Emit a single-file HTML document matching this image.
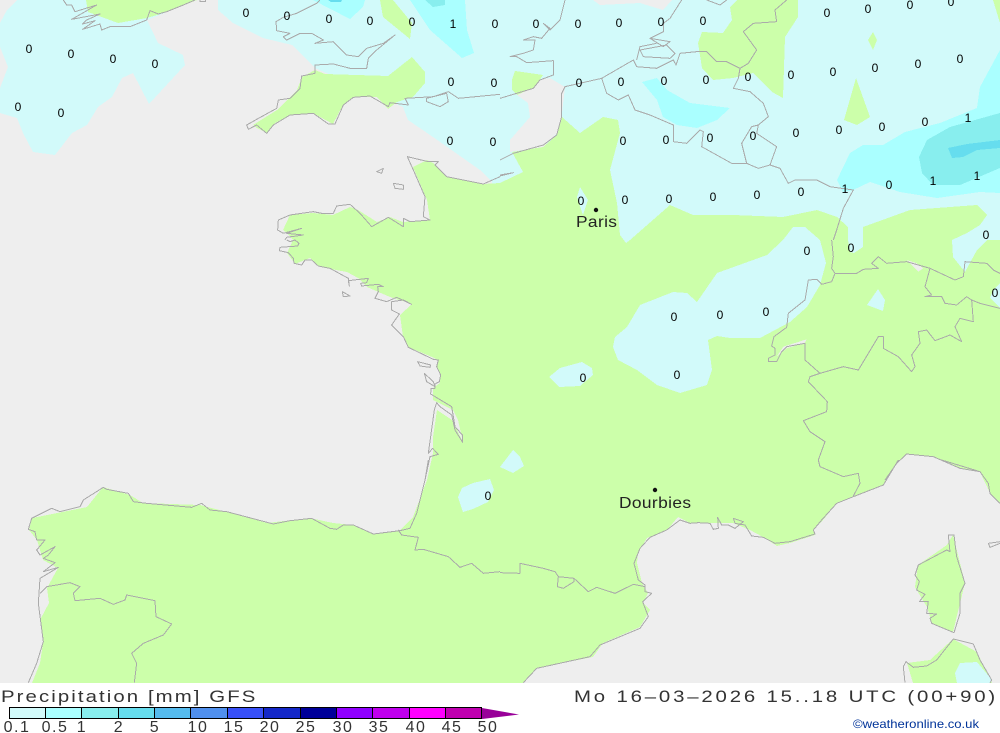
<!DOCTYPE html>
<html><head><meta charset="utf-8"><style>
html,body{margin:0;padding:0;background:#fff;width:1000px;height:733px;overflow:hidden}
svg{display:block}
text{font-family:"Liberation Sans",sans-serif;fill:#111}
.n text{font-size:12px;text-anchor:middle;fill:#000}
.c{fill:none;stroke:#aaaaaa;stroke-width:3;stroke-linejoin:round}
.l text{font-size:16px;text-anchor:middle;fill:#333;letter-spacing:1.5px}
</style></head><body>
<svg width="1000" height="733" viewBox="0 0 1000 733" xmlns="http://www.w3.org/2000/svg">
<rect width="1000" height="683" fill="#eeeeee"/>
<g shape-rendering="crispEdges">
<!-- light cyan -->
<g fill="#d2fafa">
<polygon points="17,0 7,10 0,23 0,47 8,67 0,88 0,113 17,118 23,133 33,152 55,155 72,133 87,125 98,107 112,97 122,78 133,73 149,104 185,65 183,55 158,43 147,20 197,0"/>
<polygon points="218,0 218,10 233,23 263,38 292,45 315,68 403,107 408,120 433,137 480,170 492,182 500,300 1000,300 1000,0"/>
</g>
<!-- main land green -->
<polygon fill="#ccffaa" points="287,233 283,230 290,215 313,213 333,215 350,207 358,210 377,222 390,217 403,222 430,220 427,200 413,167 427,160 433,163 447,177 483,184 500,183 523,172 512,152 543,147 557,135 562,117 580,133 603,117 618,120 620,133 610,170 617,203 620,235 626,243 630,240 670,205 693,215 733,215 783,217 817,210 837,217 848,227 848,240 850,252 854,253 863,247 863,227 910,210 977,205 987,215 980,225 967,233 952,240 953,257 965,272 977,250 987,240 1000,240 1000,503 990,493 980,472 960,468 933,457 907,454 897,463 887,477 883,485 853,497 837,503 823,520 813,530 815,535 790,543 777,546 763,537 750,530 733,523 713,523 690,523 678,517 667,530 647,538 638,553 637,563 642,583 648,593 643,603 650,610 640,627 603,643 593,657 537,668 523,683 32,683 40,663 43,643 40,620 49,603 47,588 58,568 43,560 37,540 29,530 32,518 87,507 103,487 130,495 143,503 200,505 227,512 267,523 310,518 333,523 353,525 373,534 400,530 413,517 427,480 433,453 433,437 437,410 452,420 457,430 463,442 458,420 453,410 433,400 433,388 440,383 440,373 437,367 438,360 432,357 408,347 403,337 400,315 412,304 390,297 367,287 358,278 347,272 320,267 310,258 295,264 287,253 293,240"/>
<!-- gray channel -->
<g fill="#eeeeee">
<polygon points="517,95 537,80 550,78 565,87 562,113 557,133 543,147 510,152 510,140 530,117 528,103"/>
<polygon points="593,0 600,5 640,3 663,10 672,0"/>
</g>
<!-- green islands -->
<g fill="#ccffaa">
<polygon points="253,125 277,110 297,90 302,77 315,70 325,74 388,76 412,57 425,72 425,83 413,97 397,102 388,109 377,97 353,97 343,105 333,124 320,117 313,113 290,115 275,123 267,133 257,128"/>
<polygon points="86,0 88,12 118,23 147,18 167,12 197,0"/>
<polygon points="380,0 383,17 410,39 412,23 393,0"/>
<polygon points="737,0 798,0 798,17 785,37 783,98 772,92 753,73 733,78 713,80 702,68 698,43 702,32 723,33 732,20 730,7"/>
<polygon points="512,90 512,80 515,71 543,75 535,87 517,95"/>
<polygon points="868,40 873,32 877,40 873,50"/>
<polygon points="844,120 856,78 870,117 857,125"/>
<polygon points="993,0 1000,23 1000,0"/>
<polygon points="915,587 918,565 947,545 953,535 965,583 953,632 932,623 927,607"/>
<polygon points="907,663 913,683 992,683 977,652 953,639 930,660"/>
</g>
<!-- cyan over land -->
<g fill="#d2fafa">
<polygon points="613,347 615,337 627,327 640,305 673,292 687,293 697,302 717,273 767,255 783,240 793,227 805,227 820,240 826,263 820,285 807,307 790,322 760,338 730,338 717,336 708,340 712,370 707,385 680,393 657,385 637,370 618,360"/>
<polygon points="577,197 580,187 588,200 583,215"/>
<polygon points="1000,283 993,290 990,298 997,305 1000,308"/>
<polygon points="867,305 878,289 885,300 883,311"/>
<polygon points="500,467 513,450 520,457 524,466 513,473"/>
<polygon points="549,377 560,368 582,362 592,368 593,375 580,386 559,387"/>
<polygon points="458,497 462,488 473,483 490,479 494,490 488,502 473,509 463,512"/>
<polygon points="955,673 960,663 977,662 992,680 990,683 957,683"/>
</g>
<!-- stronger precip -->
<g fill="#aaffff">
<polygon points="410,0 430,30 462,58 474,53 467,30 465,0"/>
<polygon points="313,0 350,19 363,7 365,0"/>
<polygon points="642,82 657,78 667,90 690,103 730,108 717,120 697,128 677,125 663,117 657,100"/>
<polygon points="837,180 850,153 863,145 883,145 905,132 940,123 977,108 980,87 1000,50 1000,193 980,192 937,198 900,192 870,182 853,190 843,192"/>
</g>
<polygon fill="#88eeee" points="425,0 433,7 445,5 445,0"/>
<polygon fill="#66ddee" points="328,0 331,2 341,2 342,0"/>
<polygon fill="#88eeee" points="919,157 927,140 950,127 1000,113 1000,168 960,185 933,185 922,173"/>
<polygon fill="#66ddee" points="948,148 967,144 1000,140 1000,148 977,150 963,157 952,158"/>
</g>
<!-- coastlines (coordinates are in 3x space, scaled down) -->
<g class="c" shape-rendering="crispEdges">
<g transform="scale(.33333)">
<path d="M190 0 200 15 215 15 225 35 290 15 215 58 300 42 260 60 248 72 285 62 248 88 300 72 305 90 330 80 390 80 440 60 450 32 475 42 500 35 550 15 585 0"/>
<path d="M960 0 950 10 890 40 850 52 828 65 830 92 870 100 850 110 860 120 900 100 935 100 970 120 945 130 1000 125 1040 165 1075 170 1100 145 1150 130 1185 105 1130 150 1105 175 1100 205 1050 205 1000 192 945 195 945 220 905 228 900 265 870 295 835 300 830 325 770 358 740 375 745 388 770 375 800 400 820 375 870 345 940 340 985 372 1005 372 1030 315 1060 292 1110 288 1165 320 1170 308 1225 315 1215 295 1300 290 1345 275 1375 295 1500 283"/>
<path d="M1280 295 1340 280 1345 305 1320 320 1280 305Z"/>
<path d="M850 700 833 690 835 660 870 645 940 635 965 640 1000 640 1010 618 1050 613 1080 640 1115 680 1165 652 1210 680 1210 655 1230 665 1290 660 1270 650 1275 590 1240 510 1222 470 1285 485 1315 485 1305 495 1340 530 1450 552 1500 530"/>
<path d="M850 700 905 685 860 700 910 705 860 712 855 720"/>
<path d="M1130 515 1150 505 1145 520Z M1180 550 1210 555 1210 568 1185 565Z"/>
<path d="M600 0 600 5 616 5 616 0"/>
</g>
<g transform="translate(500,0) scale(.33333)">
<path d="M0 295 100 265 120 240 160 225 160 182 80 188 50 170 30 170 70 160 100 150 105 120 70 120 100 110 125 115 150 85 130 70 150 90 180 60 195 0"/>
<path d="M0 480 40 460 130 435 170 405 185 350 185 280 195 260 305 235 400 180 410 200 470 205 520 180 528 195 540 160 590 155 620 155 650 185 680 185 720 205 715 235 700 265 750 275 790 310 805 350 775 375 770 400 830 440 810 495 840 505 865 550 885 540 950 540 990 560 1060 570 1030 625 1010 690 1000 720"/>
<path d="M305 235 320 280 355 300 385 285 405 330 450 345 520 375 520 425 560 430 600 390 610 395 605 440 695 490 740 490 775 505 810 495 M740 490 725 430 755 380 775 375"/>
<path d="M720 205 745 190 770 150 730 95 760 70 830 65 825 30 860 0"/>
<path d="M545 0 510 55 490 70 490 95 450 115 510 125 490 140 450 115 M420 150 500 135 525 160 510 175 430 170Z M410 180 420 140 470 130"/>
<path d="M620 0 660 15 680 0"/>
<path d="M0 525 40 518 0 528" />
</g>
<g transform="translate(0,240) scale(.33333)">
<path d="M860 0 870 5 885 0 897 10 893 18 840 22 838 32 865 38 880 55 882 70 905 75 915 60 935 60 955 78 990 85 1045 115 1048 138 1045 122 1105 115 1100 128 1082 130 1085 138 1135 133 1150 140 1133 140 1135 155 1125 175 1160 185 1190 172 1235 193 1210 180 1175 185 1175 210 1198 222 1175 255 1210 290 1225 322 1300 358 1315 360 1310 380 1322 405 1318 425 1305 432 1305 445 1293 445 1292 462 1355 500 1365 560 1387 585 1388 607 1365 570 1355 525 1320 500 1310 488 1303 510 1285 640 1298 625 1315 643 1290 650 1275 720"/>
<path d="M1027 155 1050 168 1030 170Z M1253 365 1292 375 1290 382 1260 378Z M1273 400 1300 425 1305 440 1280 425Z"/>
</g>
<g transform="translate(0,460) scale(.33333)">
<path d="M1285 0 1275 60 1250 160 1230 205 1200 212 1120 222 1060 195 1030 195 1010 208 990 205 935 175 870 182 820 192 680 155 630 150 605 130 575 142 440 130 400 125 385 100 320 88 310 82 250 120 240 140 180 155 155 145 115 165 95 175 85 208 105 215 110 240 135 240 110 270 120 285 165 260 145 285 130 295 165 308 130 335 175 322 120 355 115 430 130 545 110 610 85 668"/>
<path d="M1195 210 1205 225 1255 232 1245 270 1270 268 1345 290 1380 322 1415 310 1450 340 1500 335"/>
<path d="M120 400 140 380 210 368 240 380 220 400 225 422 300 415 340 433 375 420 380 405 465 422 468 470 515 492 490 525 430 550 395 580 410 610 403 668"/>
</g>
<g transform="translate(500,240) scale(.33333)">
<polygon points="830,350 850,320 920,298 915,308 860,325" fill="#eeeeee" stroke="none"/>
<polygon points="1220,60 1250,70 1270,85 1255,95" fill="#eeeeee" stroke="none"/>
<path d="M955 660 975 605 930 575 910 542 980 515 982 485 925 425 930 410 960 400 915 360 915 310 860 320 845 335 830 365 805 365 805 355 825 345 825 325 815 318 822 290 860 262 865 220 915 180 925 120 950 118 965 133 995 125 1005 100 1070 100 1090 88 1135 85 1115 70 1135 50 1160 70 1220 65 1290 85 1365 120 1390 110 1395 65 1460 70 1480 90 1500 100"/>
<path d="M960 400 1030 380 1075 390 1135 290 1150 290 1150 325 1195 350 1235 395 1245 380 1235 345 1260 310 1255 275 1280 270 1305 302 1350 285 1385 305 1365 260 1380 235 1420 245 1415 180 1400 170 1370 195 1335 190 1325 170 1275 170 1295 165 1275 140 1290 85"/>
<path d="M1415 180 1440 190 1500 205"/>
<path d="M995 0 1000 50 995 85 1005 100"/>
<path d="M1155 720 1190 670 1220 642 1300 650 1380 685 1440 695"/>
</g>
<g transform="translate(500,460) scale(.33333)">
<path d="M70 668 110 625 270 590 300 555 420 505 445 470 428 425 455 400 435 395 435 375 415 360 402 310 420 265 450 232 500 210 540 180 570 190 595 188 630 190 640 208 655 205 653 172 665 195 685 195 705 205 730 185 700 175 705 190 735 195 755 228 790 232 825 250 870 245 945 222 940 210 965 180 1010 130 1060 110 1150 75 1195 0"/>
<path d="M1060 108 1080 70 1075 40 1030 50 960 20 955 0"/>
<path d="M1325 0 1440 35 1465 70 1470 100 1500 130"/>
<path d="M0 338 60 340 60 310 130 325 165 335 175 350 222 355 265 395 290 382 345 400 400 373 435 380"/>
<path d="M175 350 172 380 190 385 222 365 222 355"/>
<path d="M1245 345 1255 315 1340 270 1350 275 1345 225 1362 225 1370 290 1395 370 1380 400 1380 460 1362 518 1295 490 1290 475 1310 462 1280 460 1285 425 1258 425 1275 403 1250 390 1258 365Z"/>
<path d="M1215 668 1210 620 1218 605 1240 622 1280 618 1310 600 1360 537 1420 552 1440 600 1475 660 1470 668"/>
<path d="M1500 245 1465 250 1470 262 1500 250"/>
</g>
</g>
<!-- values -->
<g class="n">
<text x="29" y="53">0</text><text x="71" y="58">0</text><text x="113" y="63">0</text><text x="155" y="68">0</text><text x="18" y="111">0</text><text x="61" y="117">0</text>
<text x="246" y="17">0</text><text x="287" y="20">0</text><text x="329" y="23">0</text><text x="370" y="25">0</text><text x="412" y="26">0</text><text x="453" y="28">1</text><text x="495" y="28">0</text><text x="536" y="28">0</text><text x="578" y="28">0</text><text x="619" y="27">0</text><text x="661" y="26">0</text><text x="703" y="25">0</text><text x="827" y="17">0</text><text x="868" y="13">0</text><text x="910" y="9">0</text><text x="951" y="6">0</text>
<text x="451" y="86">0</text><text x="494" y="87">0</text><text x="579" y="87">0</text><text x="621" y="86">0</text><text x="664" y="85">0</text><text x="706" y="84">0</text><text x="748" y="81">0</text><text x="791" y="79">0</text><text x="833" y="76">0</text><text x="875" y="72">0</text><text x="918" y="68">0</text><text x="960" y="63">0</text>
<text x="450" y="145">0</text><text x="493" y="146">0</text><text x="623" y="145">0</text><text x="666" y="144">0</text><text x="710" y="142">0</text><text x="753" y="140">0</text><text x="796" y="137">0</text><text x="839" y="134">0</text><text x="882" y="131">0</text><text x="925" y="126">0</text><text x="968" y="122">1</text>
<text x="581" y="205">0</text><text x="625" y="204">0</text><text x="669" y="203">0</text><text x="713" y="201">0</text><text x="757" y="199">0</text><text x="801" y="196">0</text><text x="845" y="193">1</text><text x="889" y="189">0</text><text x="933" y="185">1</text><text x="977" y="180">1</text><text x="986" y="239">0</text>
<text x="807" y="255">0</text><text x="851" y="252">0</text><text x="995" y="297">0</text><text x="674" y="321">0</text><text x="720" y="319">0</text><text x="766" y="316">0</text><text x="677" y="379">0</text><text x="583" y="382">0</text><text x="488" y="500">0</text>
</g>
<!-- cities -->
<circle cx="596" cy="210" r="2.2" fill="#111"/>
<text transform="translate(576,227) scale(1.12,1)" font-size="15.5" textLength="36.6" lengthAdjust="spacing" style="fill:#222">Paris</text>
<circle cx="655" cy="490" r="2.2" fill="#111"/>
<text transform="translate(619,508) scale(1.12,1)" font-size="15.5" textLength="64.3" lengthAdjust="spacing" style="fill:#222">Dourbies</text>
<!-- header -->
<rect y="683" width="1000" height="50" fill="#fff"/>
<text transform="translate(1,702) scale(1.2,1)" font-size="17" textLength="212" lengthAdjust="spacing" style="fill:#333">Precipitation [mm] GFS</text>
<text transform="translate(574,702) scale(1.2,1)" font-size="17" textLength="351" lengthAdjust="spacing" style="fill:#333">Mo 16–03–2026 15..18 UTC (00+90)</text>
<text x="853" y="728" font-size="12" textLength="126" lengthAdjust="spacingAndGlyphs" style="fill:#003399">©weatheronline.co.uk</text>
<!-- colour bar -->
<g shape-rendering="crispEdges" stroke="#000" stroke-width="1">
<rect x="9.5" y="707.5" width="36" height="11" fill="#d2fafa"/>
<rect x="45.5" y="707.5" width="36" height="11" fill="#aaffff"/>
<rect x="81.5" y="707.5" width="37" height="11" fill="#88eeee"/>
<rect x="118.5" y="707.5" width="36" height="11" fill="#66ddee"/>
<rect x="154.5" y="707.5" width="36" height="11" fill="#55bbee"/>
<rect x="190.5" y="707.5" width="37" height="11" fill="#5090ee"/>
<rect x="227.5" y="707.5" width="36" height="11" fill="#3850f8"/>
<rect x="263.5" y="707.5" width="37" height="11" fill="#1428c8"/>
<rect x="300.5" y="707.5" width="36" height="11" fill="#000099"/>
<rect x="336.5" y="707.5" width="36" height="11" fill="#9000ff"/>
<rect x="372.5" y="707.5" width="37" height="11" fill="#c000ee"/>
<rect x="409.5" y="707.5" width="36" height="11" fill="#ff00ff"/>
<rect x="445.5" y="707.5" width="36" height="11" fill="#c000b0"/>
</g>
<polygon points="482,708 519,714.5 482,719" fill="#990099"/>
<g class="l">
<text x="17" y="732">0.1</text><text x="55" y="732">0.5</text><text x="82" y="732">1</text><text x="119" y="732">2</text><text x="155" y="732">5</text><text x="198" y="732">10</text><text x="234" y="732">15</text><text x="270" y="732">20</text><text x="306" y="732">25</text><text x="343" y="732">30</text><text x="379" y="732">35</text><text x="416" y="732">40</text><text x="452" y="732">45</text><text x="488" y="732">50</text>
</g>
</svg>
</body></html>
